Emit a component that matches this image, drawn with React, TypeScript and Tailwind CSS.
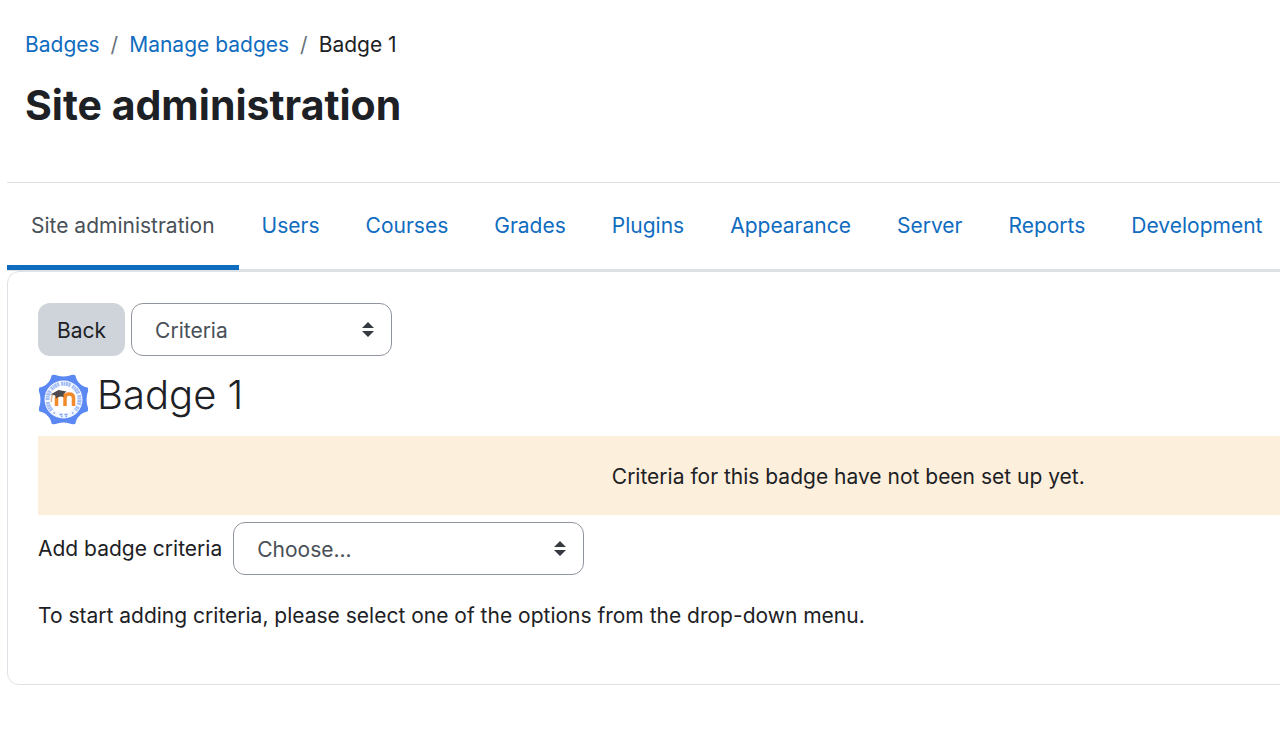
import React from 'react';

const crumbs = ['Badges', 'Manage badges'];

const tabs = ['Users', 'Courses', 'Grades', 'Plugins', 'Appearance', 'Server', 'Reports', 'Development'];

const BadgeImage = () => (
  <svg viewBox="0 0 102 102" className="size-[51px] shrink-0" role="img" aria-label="Badge 1">
    <path
      d="M29 4 Q33 3 38 5 Q51 9 64 5 Q69 3 73 4 Q76 16 82 20 Q86 26 98 29 Q99 33 97 38 Q93 51 97 64 Q99 69 98 73 Q86 76 82 82 Q76 86 73 98 Q69 99 64 97 Q51 93 38 97 Q33 99 29 98 Q26 86 20 82 Q16 76 4 73 Q3 69 5 64 Q9 51 5 38 Q3 33 4 29 Q16 26 20 20 Q26 16 29 4Z"
      fill="#5b88f2"
      stroke="#5b88f2"
      strokeWidth="4"
      strokeLinejoin="round"
    />
    <circle cx="51" cy="51" r="38" fill="#f3f7ff" />
    <path
      d="M27.5 73 A32 32 0 1 1 74.5 73"
      fill="none"
      stroke="#a3bdf7"
      strokeWidth="8"
      strokeDasharray="4 1 3 1 5 1 4 4"
    />
    <circle cx="51" cy="51" r="27" fill="#fff" />
    <path d="M43 81h6M53 81h6M46 85h3M55 85h3" stroke="#7ea3f3" strokeWidth="3" />
    <path d="M31 78h3M68 78h3" stroke="#7ea3f3" strokeWidth="3" />
    <path d="M37 64V48q0-8 8.500-8t8.500 8v16M54 48q0-8 8.500-8t8.500 8v16" fill="none" stroke="#f28a2c" strokeWidth="7" />
    <path d="M25 41 L41 32 L57 35 L51 40 L51 46 Q43 43 36 49 L35 43 Z" fill="#4c4a4b" />
    <path d="M29 41 Q26 47 27 56" fill="none" stroke="#d8b890" strokeWidth="3" />
  </svg>
);

type PickerProps = {
  id: string;
  label: string;
  options: string[];
  className: string;
};

const Picker: React.FC<PickerProps> = ({ id, label, options, className }) => (
  <div className={`relative ${className}`}>
    <select
      id={id}
      aria-label={label}
      className="h-[53px] w-full appearance-none rounded-xl border border-[#8f959e] bg-white pl-[23px] pr-12 pt-0.5 text-[#495057]"
    >
      {options.map(option => (
        <option key={option}>{option}</option>
      ))}
    </select>
    <svg viewBox="0 0 4 5" className="pointer-events-none absolute right-[18px] top-[19px] h-[15px] w-3" aria-hidden="true">
      <path fill="#343a40" d="M2 0L0 2h4zm0 5L0 3h4z" />
    </svg>
  </div>
);

const App: React.FC = () => {
  return (
    <div className="overflow-x-hidden bg-white font-['Inter',sans-serif] text-[21px] leading-8 text-[#1d2125]">
      {/* The page is wider than the window and runs off its right side */}
      <div className="w-[132%] pl-[7px]">
        <header className="px-[18px] pb-[51px] pt-[29px]">
          <nav aria-label="Breadcrumb">
            <ol className="flex">
              {crumbs.map(crumb => (
                <li key={crumb} className="flex">
                  <a href="#" className="text-[#0f6cbf]">{crumb}</a>
                  <span className="px-[11px] text-[#6a737b]">/</span>
                </li>
              ))}
              <li>Badge 1</li>
            </ol>
          </nav>
          <h1 className="mt-[18px] text-[41px] font-bold leading-[52px]">Site administration</h1>
        </header>

        {/* Tabs */}
        <nav aria-label="Site administration" className="flex h-[89px] border-b-2 border-t border-[#dee2e6]">
          <a href="#" aria-current="page" className="-mb-px border-b-5 border-[#0f6cbf] px-6 pt-[27px] text-[#495057]">
            Site administration
          </a>
          {tabs.map(tab => (
            <a key={tab} href="#" className="px-[23px] pt-[27px] text-[#0f6cbf]">{tab}</a>
          ))}
        </nav>

        <main className="rounded-xl border border-[#dee2e6] px-[30px] pb-[52px] pt-[31px]">
          <div className="flex gap-[6px]">
            <button type="button" className="h-[53px] rounded-xl bg-[#ced4da] px-[19px] pt-0.5">Back</button>
            <Picker
              id="badge-page"
              label="Badge page"
              options={['Criteria', 'Overview', 'Edit details', 'Message', 'Recipients']}
              className="w-[261px]"
            />
          </div>

          <div className="mt-[13px] flex items-end gap-2 pb-[11px]">
            <BadgeImage />
            <h2 className="pb-1 text-[40px] font-light leading-[52px]">Badge 1</h2>
          </div>

          <div role="alert" className="bg-[#fcefdc] pb-[22px] pt-[25px] text-center">
            Criteria for this badge have not been set up yet.
          </div>

          <div className="mt-[7px] flex items-center gap-[11px]">
            <label htmlFor="add-criteria">Add badge criteria</label>
            <Picker
              id="add-criteria"
              label="Add badge criteria"
              options={['Choose...', 'Manual issue by role', 'Profile completion']}
              className="w-[351px]"
            />
          </div>

          <p className="mt-[25px]">To start adding criteria, please select one of the options from the drop-down menu.</p>
        </main>
      </div>
    </div>
  );
};

export default App;
